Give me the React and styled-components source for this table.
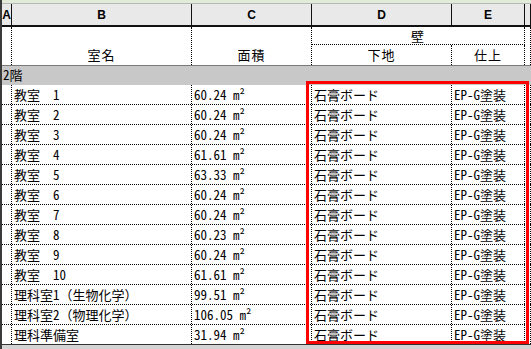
import React from "react";
import styled, { createGlobalStyle } from "styled-components";

const GlobalStyle = createGlobalStyle`
  html, body {
    margin: 0;
    padding: 0;
    background: #d4d4d4;
  }
  body {
    font-family: "Noto Sans Mono CJK JP", "Noto Sans CJK JP", "Noto Sans", monospace;
    color: #000;
  }
`;

const COLS = "10px 180px 120px 140px 73px 1fr";

const Sheet = styled.div`
  position: relative;
  width: 531px;
  height: 349px;
  overflow: hidden;
  border-left: 2px solid #3a3a3a;
  box-sizing: border-box;
  background: #d4d4d4;
`;

const TopStrip = styled.div`
  height: 3px;
  background: #e2ebd8;
`;

const LetterBar = styled.div`
  display: grid;
  grid-template-columns: ${COLS};
  height: 24px;
  box-sizing: border-box;
  border-top: 1px solid #b8b8b8;
  border-bottom: 2px solid #111;
  background: #e9e9e9;
`;

const Letter = styled.div`
  display: flex;
  align-items: center;
  justify-content: center;
  border-right: 1px solid #111;
  font-family: "Liberation Sans", Arial, sans-serif;
  font-weight: 700;
  font-size: 12px;
`;

const Header = styled.div`
  display: grid;
  grid-template-columns: ${COLS};
  grid-template-rows: 18px 20px;
  background: #fff;
`;

const HeadCell = styled.div`
  display: flex;
  justify-content: center;
  align-items: ${(p) => (p.$bottom ? "flex-end" : "center")};
  padding-bottom: ${(p) => (p.$bottom ? "1px" : "0")};
  box-sizing: border-box;
  border-right: 1px dotted #000;
  border-bottom: ${(p) => (p.$under ? "1px dotted #000" : "none")};
  grid-column: ${(p) => p.$col};
  grid-row: ${(p) => p.$row};
  font-size: 13px;
  line-height: 18px;
  letter-spacing: 1px;
`;

const GroupRow = styled.div`
  height: 20px;
  box-sizing: border-box;
  border-top: 1px solid #7a7a7a;
  background: #c8c8c8;
  font-size: 13px;
  line-height: 18px;
  padding-left: 1px;
`;

const Body = styled.div`
  background: #fff;
`;

const Row = styled.div`
  display: grid;
  grid-template-columns: ${COLS};
  height: 20px;
  box-sizing: border-box;
  border-bottom: 1px dotted #000;
  &:last-child {
    border-bottom: 1px solid #333;
  }
`;

const Cell = styled.div`
  border-right: 1px dotted #000;
  padding-left: 2px;
  font-size: 13px;
  line-height: 19px;
  white-space: pre;
  overflow: hidden;
`;

const Highlight = styled.div`
  position: absolute;
  left: 304px;
  top: 81px;
  width: 223px;
  height: 263px;
  box-sizing: border-box;
  border: 3px solid #f00;
  pointer-events: none;
`;

const rooms = [
  ["教室　1", "60.24 m²"],
  ["教室　2", "60.24 m²"],
  ["教室　3", "60.24 m²"],
  ["教室　4", "61.61 m²"],
  ["教室　5", "63.33 m²"],
  ["教室　6", "60.24 m²"],
  ["教室　7", "60.24 m²"],
  ["教室　8", "60.23 m²"],
  ["教室　9", "60.24 m²"],
  ["教室　10", "61.61 m²"],
  ["理科室1（生物化学）", "99.51 m²"],
  ["理科室2（物理化学）", "106.05 m²"],
  ["理科準備室", "31.94 m²"],
];

export default function App() {
  return (
    <>
      <GlobalStyle />
      <Sheet>
        <TopStrip />
        <LetterBar>
          <Letter>A</Letter>
          <Letter>B</Letter>
          <Letter>C</Letter>
          <Letter>D</Letter>
          <Letter>E</Letter>
          <Letter />
        </LetterBar>
        <Header>
          <HeadCell $col="1" $row="1 / 3" />
          <HeadCell $col="2" $row="1 / 3" $bottom>室名</HeadCell>
          <HeadCell $col="3" $row="1 / 3" $bottom>面積</HeadCell>
          <HeadCell $col="4 / 6" $row="1" $under>壁</HeadCell>
          <HeadCell $col="4" $row="2">下地</HeadCell>
          <HeadCell $col="5" $row="2">仕上</HeadCell>
          <HeadCell $col="6" $row="1 / 3" />
        </Header>
        <GroupRow>2階</GroupRow>
        <Body>
          {rooms.map(([name, area]) => (
            <Row key={name}>
              <Cell />
              <Cell>{name}</Cell>
              <Cell>{area}</Cell>
              <Cell>石膏ボード</Cell>
              <Cell>EP-G塗装</Cell>
              <Cell />
            </Row>
          ))}
        </Body>
        <Highlight />
      </Sheet>
    </>
  );
}
